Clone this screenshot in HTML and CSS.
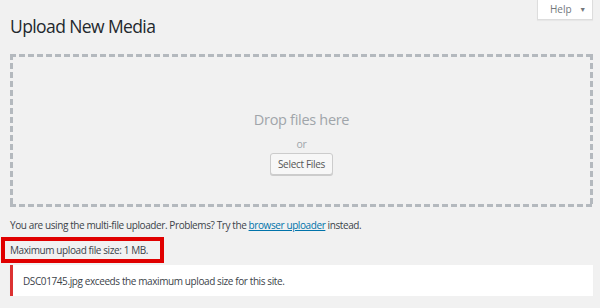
FILE: index.html
```html
<!DOCTYPE html>
<html lang="en">
<head>
    <meta charset="UTF-8">
    <meta name="viewport" content="width=device-width, initial-scale=1.0">
    <title>Upload New Media</title>
    <link rel="stylesheet" href="styles.css">
</head>
<body>

    <div class="wrap">
        <!-- Onglet d'aide en haut a droite -->
        <div class="help-tab">Help <span class="arrow">&#9660;</span></div>

        <h1 class="page-title">Upload New Media</h1>

        <div class="drop-area">
            <p class="drop-text">Drop files here</p>
            <p class="drop-or">or</p>
            <button class="select-button">Select Files</button>
        </div>

        <p class="uploader-info">You are using the multi-file uploader. Problems? Try the <a href="#">browser uploader</a> instead.</p>

        <p class="max-size">Maximum upload file size: 1 MB.</p>

        <div class="notice-error">
            <p>DSC01745.jpg exceeds the maximum upload size for this site.</p>
        </div>
    </div>

</body>
</html>
```

FILE: styles.css
```css
body {
    font-family: 'Open Sans', 'Noto Sans', sans-serif;
    background-color: #f1f1f1;
    color: #3c434a;
    margin: 0;
    padding: 0;
    letter-spacing: -0.4px;
}

p {
    margin: 0;
}

.wrap {
    padding: 0 7px 0 10px;
}

.help-tab {
    float: right;
    width: 56px;
    height: 20px;
    box-sizing: border-box;
    background-color: #fff;
    border: 1px solid #ddd;
    border-top: none;
    box-shadow: 0 1px 1px rgba(0, 0, 0, 0.04);
    font-size: 10px;
    color: #72777c;
    line-height: 18px;
    padding-left: 12px;
    letter-spacing: 0;
}

.help-tab .arrow {
    font-size: 7px;
    margin-left: 5px;
    vertical-align: 1px;
}

.page-title {
    font-size: 17.5px;
    font-weight: 400;
    color: #23282d;
    margin: 0;
    padding-top: 13px;
    line-height: 26px;
    letter-spacing: -0.6px;
}

/* Bordure pointillee dessinee en degrades pour avoir des tirets courts */
.drop-area {
    margin-top: 15px;
    height: 153px;
    box-sizing: border-box;
    padding-top: 56px;
    display: flex;
    flex-direction: column;
    align-items: center;
    background:
        repeating-linear-gradient(90deg, #b4b9be 0 6px, transparent 6px 9px) top left / 100% 3px no-repeat,
        repeating-linear-gradient(90deg, #b4b9be 0 6px, transparent 6px 9px) bottom left / 100% 3px no-repeat,
        repeating-linear-gradient(180deg, #b4b9be 0 6px, transparent 6px 9px) top left / 3px 100% no-repeat,
        repeating-linear-gradient(180deg, #b4b9be 0 6px, transparent 6px 9px) top right / 3px 100% no-repeat;
}

.drop-text {
    font-size: 14.5px;
    color: #a0a5aa;
    line-height: 20px;
    letter-spacing: -0.3px;
}

.drop-or {
    font-size: 10.5px;
    color: #a0a5aa;
    line-height: 14px;
    margin: 7px 0 2px;
}

.select-button {
    font-family: inherit;
    font-size: 10px;
    letter-spacing: -0.3px;
    color: #555;
    background-color: #f7f7f7;
    border: 1px solid #ccc;
    border-radius: 3px;
    box-shadow: 0 1px 0 #ccc;
    width: 63px;
    height: 22px;
    padding: 0;
    cursor: pointer;
}

.uploader-info {
    font-size: 10px;
    line-height: 14px;
    margin-top: 11px;
}

.uploader-info a {
    color: #0073aa;
}

.max-size {
    display: inline-block;
    font-size: 10px;
    line-height: 14px;
    margin: 5px 0 0 -9px;
    padding: 2px 12px 2px 5px;
    border: 4px solid #e00000;
}

.notice-error {
    margin-top: 2px;
    height: 31px;
    box-sizing: border-box;
    display: flex;
    align-items: center;
    background-color: #fff;
    border-left: 3px solid #dc3232;
    box-shadow: 0 1px 1px rgba(0, 0, 0, 0.04);
    padding-left: 10px;
    font-size: 10px;
}
```
